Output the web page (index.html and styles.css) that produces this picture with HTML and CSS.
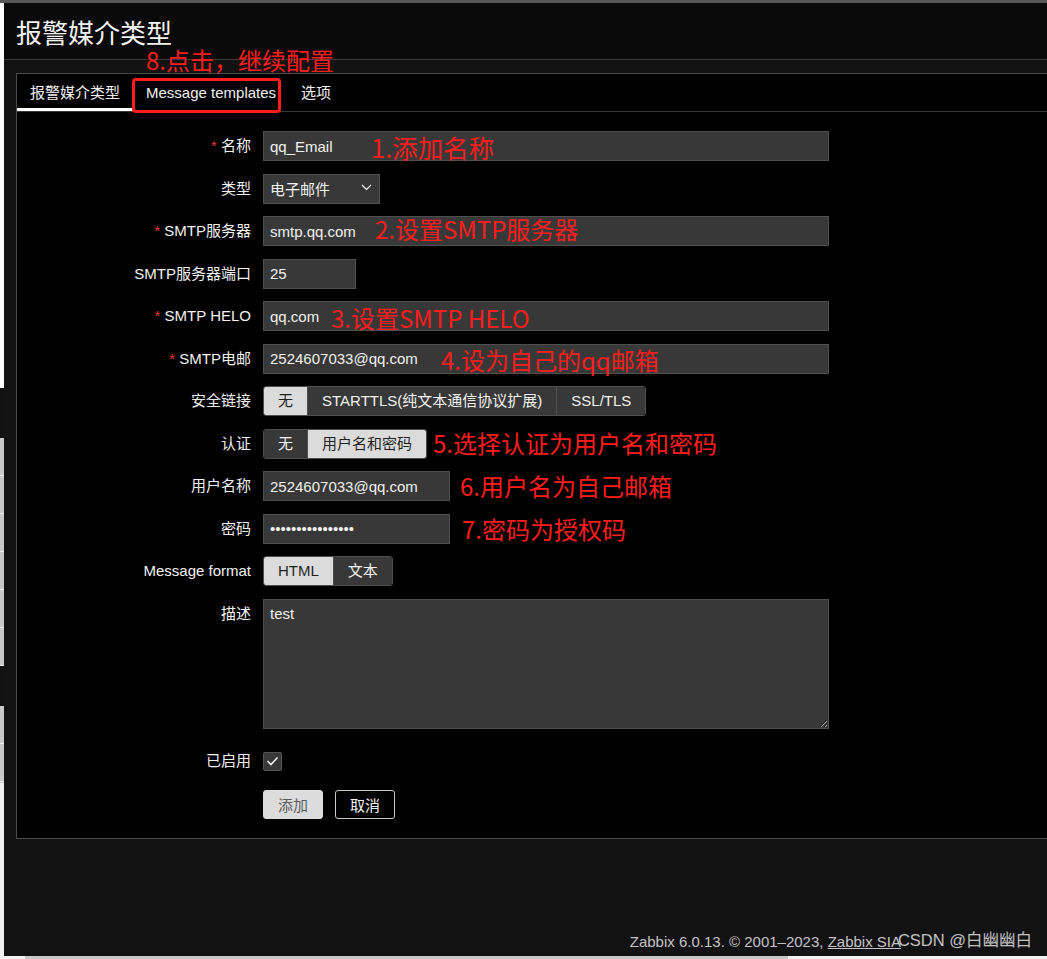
FILE: index.html
```html
<!DOCTYPE html>
<html>
    <head>
        <title>报警媒介类型</title>
        <link rel="stylesheet" href="styles.css">
    </head>
<body>
    <div class="topline"></div>
    <div class="screen">
        <div class="edge">
            <div class="edge-white"></div>
            <div class="edge-dark"></div>
            <div class="edge-rows edge-rows-a"></div>
            <div class="edge-dark edge-dark-b"></div>
            <div class="edge-rows edge-rows-b"></div>
            <div class="edge-light"></div>
        </div>
        <div class="page">
            <header class="page-header">
                <h1>报警媒介类型</h1>
            </header>
            <div class="note note-8">8.点击，继续配置</div>

            <main class="content">
                <div class="form-box">
                    <ul class="tabs">
                        <li class="tab active">报警媒介类型</li>
                        <li class="tab">Message templates</li>
                        <li class="tab">选项</li>
                        <span class="mark-box"></span>
                    </ul>

                    <form class="media-form">
                        <div class="row">
                            <label><span class="req">*</span> 名称</label>
                            <div class="field">
                                <input class="text-input wide" type="text" value="qq_Email">
                                <span class="note note-big" style="left:108px;top:1px">1.添加名称</span>
                            </div>
                        </div>
                        <div class="row">
                            <label>类型</label>
                            <div class="field">
                                <div class="select">
                                    <span>电子邮件</span>
                                    <svg width="11" height="7" viewBox="0 0 11 7"><path d="M1 1l4.5 4.5L10 1" fill="none" stroke="#f2f2f2" stroke-width="1.2"/></svg>
                                </div>
                            </div>
                        </div>
                        <div class="row">
                            <label><span class="req">*</span> SMTP服务器</label>
                            <div class="field">
                                <input class="text-input wide" type="text" value="smtp.qq.com">
                                <span class="note" style="left:112px;top:-2px">2.设置SMTP服务器</span>
                            </div>
                        </div>
                        <div class="row">
                            <label>SMTP服务器端口</label>
                            <div class="field">
                                <input class="text-input port" type="text" value="25">
                            </div>
                        </div>
                        <div class="row">
                            <label><span class="req">*</span> SMTP HELO</label>
                            <div class="field">
                                <input class="text-input wide" type="text" value="qq.com">
                                <span class="note" style="left:68px;top:2px">3.设置SMTP HELO</span>
                            </div>
                        </div>
                        <div class="row">
                            <label><span class="req">*</span> SMTP电邮</label>
                            <div class="field">
                                <input class="text-input wide" type="text" value="2524607033@qq.com">
                                <span class="note" style="left:178px;top:1px">4.设为自己的qq邮箱</span>
                            </div>
                        </div>
                        <div class="row">
                            <label>安全链接</label>
                            <div class="field">
                                <div class="seg">
                                    <span class="on">无</span>
                                    <span>STARTTLS(纯文本通信协议扩展)</span>
                                    <span>SSL/TLS</span>
                                </div>
                            </div>
                        </div>
                        <div class="row">
                            <label>认证</label>
                            <div class="field">
                                <div class="seg">
                                    <span>无</span>
                                    <span class="on">用户名和密码</span>
                                </div>
                                <span class="note" style="left:170px;top:-1px">5.选择认证为用户名和密码</span>
                            </div>
                        </div>
                        <div class="row">
                            <label>用户名称</label>
                            <div class="field">
                                <input class="text-input user" type="text" value="2524607033@qq.com">
                                <span class="note" style="left:197px;top:0">6.用户名为自己邮箱</span>
                            </div>
                        </div>
                        <div class="row">
                            <label>密码</label>
                            <div class="field">
                                <input class="text-input user" type="password" value="abcdefghijklmnop">
                                <span class="note" style="left:199px;top:0">7.密码为授权码</span>
                            </div>
                        </div>
                        <div class="row">
                            <label>Message format</label>
                            <div class="field">
                                <div class="seg">
                                    <span class="on">HTML</span>
                                    <span>文本</span>
                                </div>
                            </div>
                        </div>
                        <div class="row">
                            <label>描述</label>
                            <div class="field">
                                <textarea class="text-area">test</textarea>
                            </div>
                        </div>
                        <div class="row row-check">
                            <label>已启用</label>
                            <div class="field field-check">
                                <span class="checkbox">
                                    <svg width="13" height="10" viewBox="0 0 13 10"><path d="M1.5 5l3.5 3.5L11.5 1.5" fill="none" stroke="#f2f2f2" stroke-width="1.6"/></svg>
                                </span>
                            </div>
                        </div>
                        <div class="row row-buttons">
                            <div></div>
                            <div class="field buttons">
                                <button type="button" class="btn btn-add">添加</button>
                                <button type="button" class="btn btn-cancel">取消</button>
                            </div>
                        </div>
                    </form>
                </div>
            </main>

            <footer class="page-footer">
                Zabbix 6.0.13. &copy; 2001&ndash;2023, <a href="#">Zabbix SIA</a>
                <span class="watermark">CSDN @白幽幽白</span>
            </footer>
        </div>
    </div>
    <div class="bottomstrip">
        <div class="strip-gap"></div>
        <div class="strip-bar"></div>
    </div>
</body>
</html>
```

FILE: styles.css
```css
* {
    box-sizing: border-box;
}

html, body {
    margin: 0;
    height: 100%;
}

body {
    font-family: "Liberation Sans", Arial, "Noto Sans CJK SC", sans-serif;
    font-size: 15px;
    background-color: #f0f0f0;
    overflow: hidden;
    display: flex;
    flex-direction: column;
}

.topline {
    height: 3px;
    flex: none;
    background-color: #595959;
}

.screen {
    flex: 1;
    min-height: 0;
    display: flex;
}

/* strip of the window behind, on the left */
.edge {
    width: 4px;
    flex: none;
    display: flex;
    flex-direction: column;
}

.edge-white {
    height: 385px;
    background-color: #fff;
}

.edge-dark {
    height: 50px;
    background-color: #111;
}

.edge-dark-b {
    height: 40px;
}

.edge-rows {
    background: repeating-linear-gradient(#c8c8c8 0 37px, #ececec 37px 38px);
}

.edge-rows-a {
    height: 228px;
}

.edge-rows-b {
    height: 77px;
}

.edge-light {
    flex: 1;
    background-color: #f0f0f0;
}

.page {
    flex: 1;
    position: relative;
    overflow: hidden;
    display: flex;
    flex-direction: column;
    background-color: #121212;
}

.page-header {
    height: 57px;
    flex: none;
    display: flex;
    align-items: center;
    padding-left: 12px;
    background-color: #0a0a0a;
    border-bottom: 1px solid #3b3b3b;
}

.page-header h1 {
    margin: 0;
    font-size: 26px;
    font-weight: normal;
    color: #f2f2f2;
}

.content {
    padding: 13px 0 0 12px;
}

.form-box {
    margin-right: -40px;
    background-color: #000;
    border: 1px solid #4a4a4a;
}

.tabs {
    position: relative;
    display: flex;
    margin: 0;
    padding: 0;
    list-style: none;
    border-bottom: 1px solid #383838;
}

.tab {
    height: 37px;
    line-height: 37px;
    padding: 0 12px 0 13px;
    color: #f2f2f2;
}

.tab.active {
    padding-right: 13px;
    box-shadow: inset 0 -3px 0 #fff;
}

/* red annotations drawn over the screenshot */
.note {
    position: absolute;
    white-space: nowrap;
    font-family: "Noto Sans CJK SC", sans-serif;
    font-size: 24px;
    line-height: 30px;
    color: #ff1c1c;
}

.note-big {
    font-size: 25.5px;
}

.note-8 {
    left: 142px;
    top: 42px;
}

.mark-box {
    position: absolute;
    left: 115px;
    top: 4px;
    width: 149px;
    height: 35px;
    border: 3px solid #ff1c1c;
    border-radius: 4px;
}

.media-form {
    display: flex;
    flex-direction: column;
    gap: 12.5px;
    padding: 19px 0 19px;
}

.row {
    display: grid;
    grid-template-columns: 234px 1fr;
    column-gap: 12px;
    align-items: start;
}

.row label {
    text-align: right;
    line-height: 30px;
    color: #f2f2f2;
}

.req {
    color: #e33734;
}

.field {
    position: relative;
    display: flex;
    align-items: flex-start;
}

.text-input {
    height: 30px;
    padding: 0 6px;
    font-family: inherit;
    font-size: 15px;
    color: #f2f2f2;
    background-color: #383838;
    border: 1px solid #4f4f4f;
    outline: none;
}

.wide {
    width: 566px;
}

.port {
    width: 93px;
}

.user {
    width: 187px;
}

.select {
    width: 117px;
    height: 30px;
    display: flex;
    align-items: center;
    justify-content: space-between;
    padding: 0 7px 0 6px;
    color: #f2f2f2;
    background-color: #383838;
    border: 1px solid #4f4f4f;
}

.select svg {
    margin-top: -2px;
}

.seg {
    display: flex;
    height: 30px;
    border: 1px solid #4f4f4f;
    border-radius: 3px;
    overflow: hidden;
}

.seg span {
    padding: 0 14px;
    line-height: 28px;
    color: #f2f2f2;
    background-color: #383838;
    border-left: 1px solid #4f4f4f;
}

.seg span:first-child {
    border-left: none;
}

.seg span.on {
    color: #1f1f1f;
    background-color: #dbdbdb;
}

.text-area {
    width: 566px;
    height: 130px;
    padding: 5px 6px;
    font-family: inherit;
    font-size: 15px;
    line-height: 18px;
    color: #f2f2f2;
    background-color: #383838;
    border: 1px solid #4f4f4f;
    outline: none;
    resize: both;
}

.row-check {
    padding-top: 5px;
}

.field-check {
    height: 30px;
    align-items: center;
}

.checkbox {
    width: 19px;
    height: 19px;
    display: flex;
    align-items: center;
    justify-content: center;
    background-color: #383838;
    border: 1px solid #555;
    border-radius: 2px;
}

.row-buttons {
    padding-top: 1px;
}

.buttons {
    gap: 12px;
}

.btn {
    height: 29px;
    padding: 0 14px;
    font-family: inherit;
    font-size: 15px;
    border-radius: 3px;
    cursor: pointer;
}

.btn-add {
    color: #5c5c5c;
    background-color: #dcdcdc;
    border: 1px solid #dcdcdc;
}

.btn-cancel {
    color: #f2f2f2;
    background-color: #000;
    border: 1px solid #c8c8c8;
}

.page-footer {
    position: relative;
    margin-top: auto;
    height: 28px;
    line-height: 28px;
    padding-right: 146px;
    text-align: right;
    color: #c4c4c4;
}

.page-footer a {
    color: #c4c4c4;
}

.watermark {
    position: absolute;
    right: 15px;
    top: -2px;
    font-size: 16.5px;
    color: rgba(255, 255, 255, 0.75);
}

.bottomstrip {
    height: 3px;
    flex: none;
    display: flex;
}

.strip-gap {
    width: 25px;
}

.strip-bar {
    width: 763px;
    background-color: #c8c8c8;
}
```
